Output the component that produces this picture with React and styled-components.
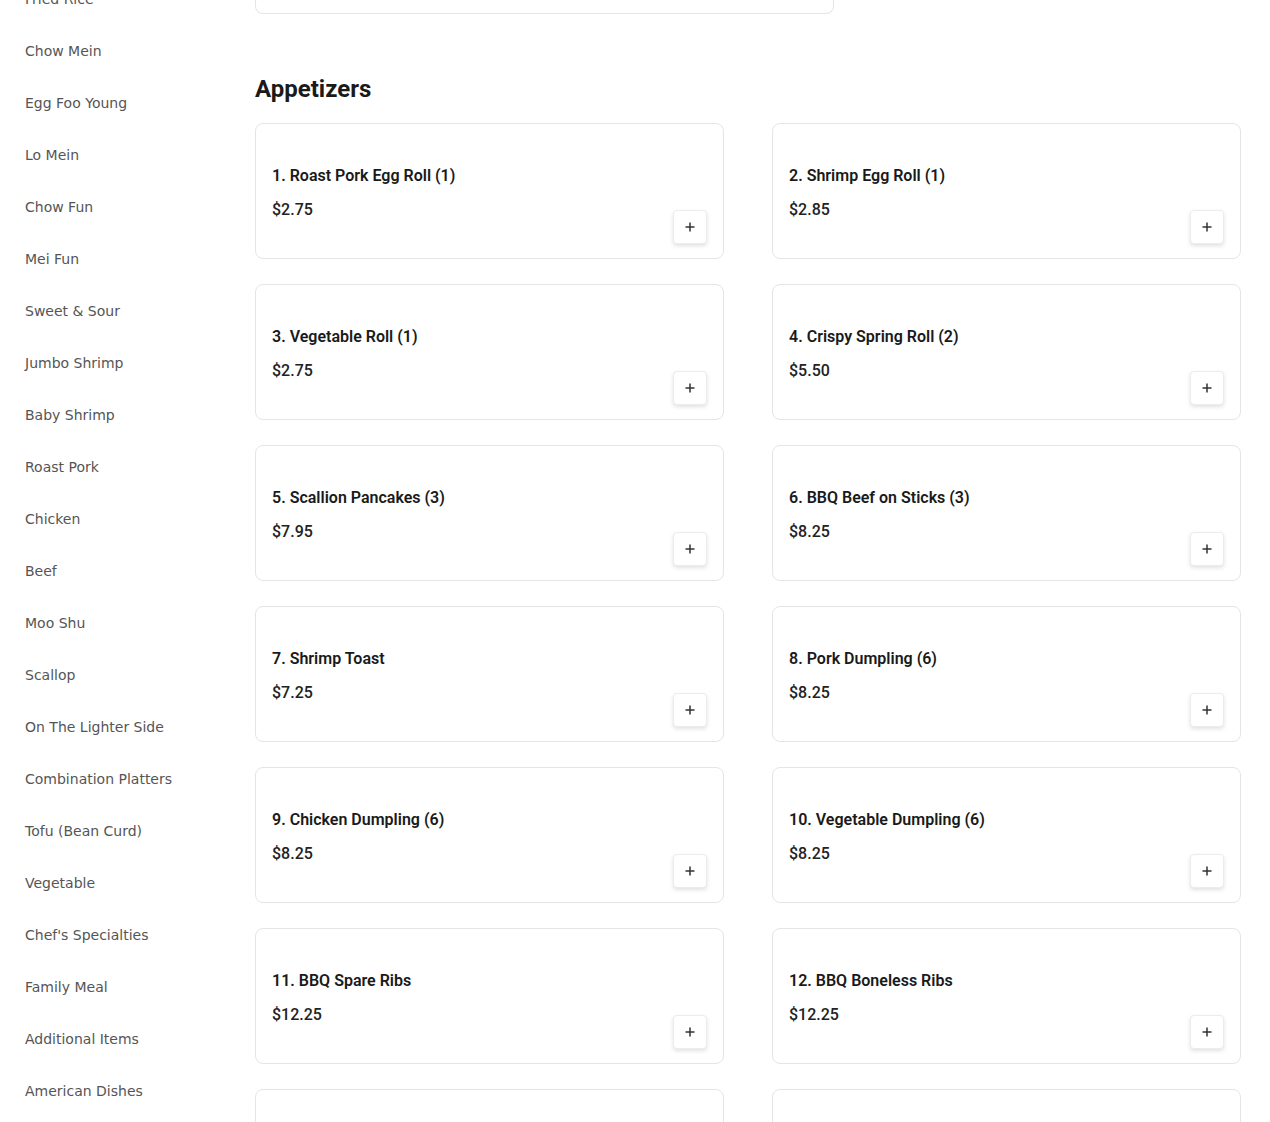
import React from 'react';
import styled, { createGlobalStyle } from 'styled-components';

const GlobalStyle = createGlobalStyle`
  body {
    margin: 0;
    background: #fff;
    font-family: Roboto, "Liberation Sans", sans-serif;
  }
`;

const Page = styled.div`
  display: flex;
  align-items: flex-start;
  gap: 24px;
  padding: 0 29px 0 25px;
  margin-top: -27px;
`;

const Sidebar = styled.nav`
  width: 206px;
  flex-shrink: 0;

  ul {
    list-style-type: none;
    margin: 0;
    padding: 0;
  }

  li {
    font-family: "DejaVu Sans", sans-serif;
    font-size: 14px;
    line-height: 20px;
    padding: 16px 0;
    color: #555;
  }
`;

const Main = styled.main`
  flex: 1;
  min-width: 0;
`;

const InfoBox = styled.div`
  width: 579px;
  height: 41px;
  box-sizing: border-box;
  border: 1px solid #e5e5e5;
  border-top: none;
  border-radius: 0 0 8px 8px;
`;

const Section = styled.section`
  margin-top: 59px;

  h2 {
    font-size: 24px;
    line-height: 32px;
    font-weight: 700;
    color: #1a1a1a;
    margin: 0 0 18px;
  }
`;

const Grid = styled.div`
  display: grid;
  grid-template-columns: 1fr 1fr;
  column-gap: 48px;
  row-gap: 25px;
`;

const Card = styled.div`
  display: flex;
  align-items: center;
  justify-content: space-between;
  min-height: 136px;
  box-sizing: border-box;
  padding: 17px 16px 14px;
  border: 1px solid #e5e5e5;
  border-radius: 8px;
  background: #fff;

  .name {
    font-size: 16px;
    line-height: 24px;
    font-weight: 600;
    color: #1a1a1a;
    margin-bottom: 10px;
  }

  .price {
    font-size: 16px;
    line-height: 24px;
    font-weight: 500;
    color: #222;
  }
`;

const AddButton = styled.button`
  align-self: flex-end;
  width: 34px;
  height: 34px;
  padding: 0;
  display: flex;
  align-items: center;
  justify-content: center;
  background: #fff;
  border: 1px solid #ececec;
  border-radius: 4px;
  box-shadow: 0 2px 4px rgba(0, 0, 0, 0.12);
  color: #333;
  cursor: pointer;
`;

const categories = [
  'Fried Rice', 'Chow Mein', 'Egg Foo Young', 'Lo Mein', 'Chow Fun', 'Mei Fun',
  'Sweet & Sour', 'Jumbo Shrimp', 'Baby Shrimp', 'Roast Pork', 'Chicken', 'Beef',
  'Moo Shu', 'Scallop', 'On The Lighter Side', 'Combination Platters',
  'Tofu (Bean Curd)', 'Vegetable', "Chef's Specialties", 'Family Meal',
  'Additional Items', 'American Dishes',
];

const appetizers = [
  { name: '1. Roast Pork Egg Roll (1)', price: 2.75 },
  { name: '2. Shrimp Egg Roll (1)', price: 2.85 },
  { name: '3. Vegetable Roll (1)', price: 2.75 },
  { name: '4. Crispy Spring Roll (2)', price: 5.5 },
  { name: '5. Scallion Pancakes (3)', price: 7.95 },
  { name: '6. BBQ Beef on Sticks (3)', price: 8.25 },
  { name: '7. Shrimp Toast', price: 7.25 },
  { name: '8. Pork Dumpling (6)', price: 8.25 },
  { name: '9. Chicken Dumpling (6)', price: 8.25 },
  { name: '10. Vegetable Dumpling (6)', price: 8.25 },
  { name: '11. BBQ Spare Ribs', price: 12.25 },
  { name: '12. BBQ Boneless Ribs', price: 12.25 },
  { name: '13. Fried Wonton (10)', price: 6.25 },
  { name: '14. Crab Rangoon (8)', price: 8.25 },
];

const PlusIcon = () => (
  <svg width="10" height="10" viewBox="0 0 10 10" fill="none" stroke="currentColor" strokeWidth="1.5">
    <path d="M5 0.5v9M0.5 5h9" />
  </svg>
);

const MenuItem = ({ item }) => (
  <Card>
    <div>
      <div className="name">{item.name}</div>
      <div className="price">{`$${item.price.toFixed(2)}`}</div>
    </div>
    <AddButton aria-label={`Add ${item.name}`}>
      <PlusIcon />
    </AddButton>
  </Card>
);

const App = () => (
  <>
    <GlobalStyle />
    <Page>
      <Sidebar>
        <ul>
          {categories.map((c) => <li key={c}>{c}</li>)}
        </ul>
      </Sidebar>
      <Main>
        <InfoBox />
        <Section>
          <h2>Appetizers</h2>
          <Grid>
            {appetizers.map((item) => <MenuItem key={item.name} item={item} />)}
          </Grid>
        </Section>
      </Main>
    </Page>
  </>
);

export default App;
